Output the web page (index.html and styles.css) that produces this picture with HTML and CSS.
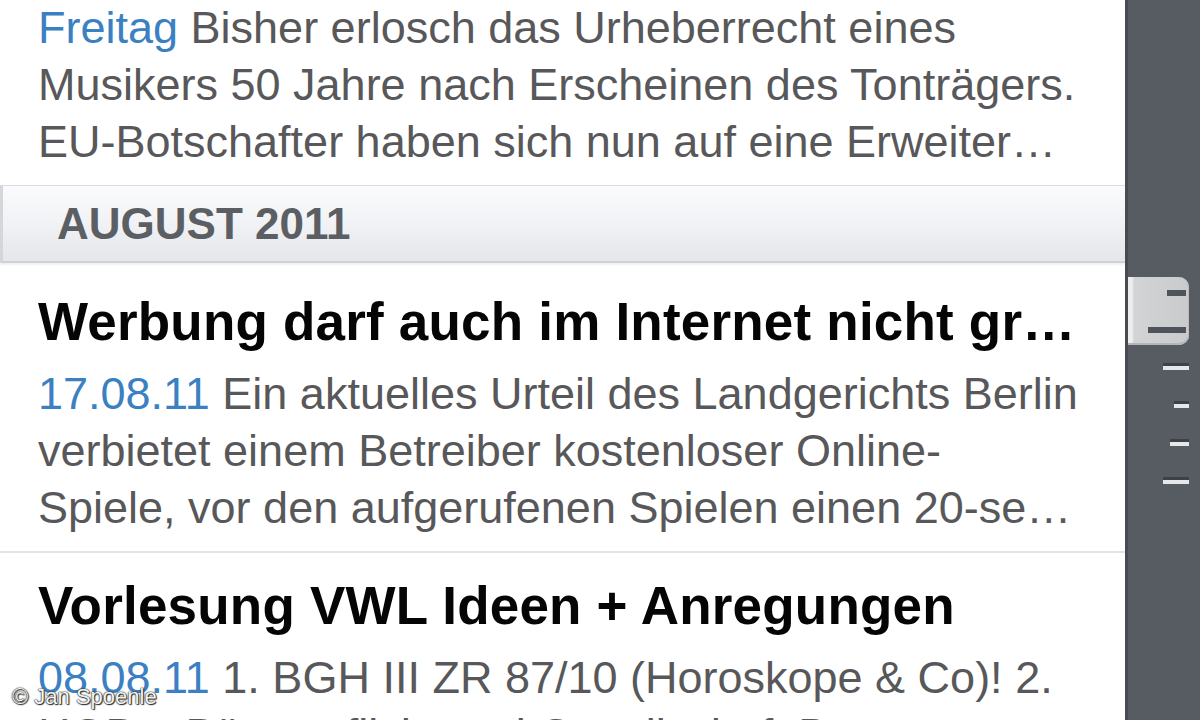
FILE: index.html
```html
<!DOCTYPE html>
<html lang="de">
<head>
<meta charset="utf-8">
<title>News</title>
<link rel="stylesheet" href="styles.css">
</head>
<body>
<div class="screen">
  <main class="list">
    <article class="item item-top">
      <p class="summary"><span class="date">Freitag</span> Bisher erlosch das Urheberrecht eines<br>Musikers 50 Jahre nach Erscheinen des Tonträgers.<br>EU-Botschafter haben sich nun auf eine Erweiter…</p>
    </article>
    <h2 class="section">AUGUST 2011</h2>
    <article class="item item-first">
      <h3 class="title">Werbung darf auch im Internet nicht gr…</h3>
      <p class="summary"><span class="date">17.08.11</span> Ein aktuelles Urteil des Landgerichts Berlin<br>verbietet einem Betreiber kostenloser Online-<br>Spiele, vor den aufgerufenen Spielen einen 20-se…</p>
    </article>
    <article class="item">
      <h3 class="title">Vorlesung VWL Ideen + Anregungen</h3>
      <p class="summary"><span class="date">08.08.11</span> 1. BGH III ZR 87/10 (Horoskope &amp; Co)! 2.<br>HGB – Bürgerpflicht und Gesellschaft Dr…</p>
    </article>
  </main>
  <aside class="index">
    <div class="thumb">
      <span class="bar bar-short"></span>
      <span class="bar bar-long"></span>
    </div>
    <span class="tick tick-wide"></span>
    <span class="tick tick-small"></span>
    <span class="tick tick-mid"></span>
    <span class="tick tick-wide"></span>
  </aside>
  <div class="credit">© Jan Spoenle</div>
</div>
</body>
</html>
```

FILE: styles.css
```css
html, body {
  margin: 0;
  padding: 0;
  background: #ffffff;
}

.screen {
  position: relative;
  width: 1200px;
  height: 720px;
  overflow: hidden;
  display: flex;
  font-family: "Liberation Sans", Arial, Helvetica, sans-serif;
}

.list {
  width: 1125px;
  flex: none;
  display: flex;
  flex-direction: column;
  background: #ffffff;
}

.item {
  padding: 23px 0 15px 38px;
  border-bottom: 2px solid #e3e3e5;
}

.item-top {
  margin-top: -1px;
  padding-top: 0;
  padding-bottom: 15px;
  border-bottom: 1px solid #dcdde0;
}

.item-first {
  padding-top: 29px;
}

.title {
  margin: 0 0 13px 0;
  font-size: 53px;
  line-height: 60px;
  font-weight: bold;
  color: #050505;
  white-space: nowrap;
  letter-spacing: 0.2px;
}

.summary {
  margin: 0;
  font-size: 45px;
  line-height: 57px;
  color: #58585a;
  white-space: nowrap;
}

.date {
  color: #3b80c2;
}

.section {
  margin: 0;
  height: 75px;
  padding-left: 54px;
  font-size: 44px;
  line-height: 76px;
  font-weight: bold;
  color: #5b5e62;
  background: linear-gradient(to bottom, #fafbfc 0%, #f1f2f5 50%, #e4e6ea 100%);
  border-bottom: 2px solid #cfd2d7;
  box-shadow: 0 2px 2px rgba(0, 0, 0, 0.06);
  border-left: 3px solid #d3d6db;
}

.index {
  flex: 1;
  display: flex;
  flex-direction: column;
  align-items: flex-end;
  padding: 277px 12px 0 0;
  background: #575b62;
  border-left: 3px solid #474b52;
}

.thumb {
  box-sizing: border-box;
  width: 61px;
  height: 68px;
  border-radius: 0 10px 10px 0;
  background: linear-gradient(to right, #eeeeef 0px, #eeeeef 4px, #d3d4d6 6px, #c9cacc 100%);
  box-shadow: inset 0 -2px 0 #b4b6b9, inset -1px 0 0 #b9bbbe;
  display: flex;
  flex-direction: column;
  align-items: flex-end;
  padding: 13px 3px 0 0;
}

.bar {
  display: block;
  height: 6px;
  background: #4f535a;
}

.bar-short {
  width: 19px;
}

.bar-long {
  width: 38px;
  margin-top: 31px;
}

.tick {
  display: block;
  height: 4px;
  border-top: 3px solid #3e4148;
  background: #e6e7e9;
}

.tick + .tick {
  margin-top: 31px;
}

.thumb + .tick {
  margin-top: 18px;
}

.tick-wide {
  width: 26px;
}

.tick-small {
  width: 15px;
}

.tick-mid {
  width: 19px;
}

.credit {
  position: absolute;
  left: 12px;
  top: 684px;
  font-family: "Liberation Sans", Arial, sans-serif;
  font-size: 22px;
  line-height: 26px;
  color: #f4f4f4;
  text-shadow: 0 0 2px #222, 0 0 1px #000, 1px 1px 1px #333;
}
```
